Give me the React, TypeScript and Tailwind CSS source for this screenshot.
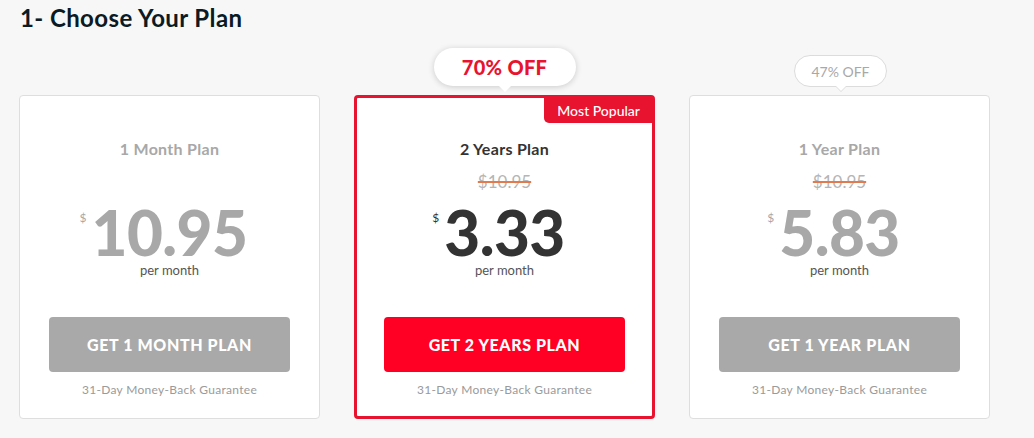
import { JSX } from 'react';

interface Plan {
    name: string;
    price: string;
    oldPrice?: string;
    cta: string;
    featured?: boolean;
    discount?: string;
}

const plans: Plan[] = [
    { name: '1 Month Plan', price: '10.95', cta: 'GET 1 MONTH PLAN' },
    { name: '2 Years Plan', price: '3.33', oldPrice: '$10.95', cta: 'GET 2 YEARS PLAN', featured: true, discount: '70% OFF' },
    { name: '1 Year Plan', price: '5.83', oldPrice: '$10.95', cta: 'GET 1 YEAR PLAN', discount: '47% OFF' },
];

const PlanCard = ({ plan }: { plan: Plan }): JSX.Element => {
    const f = plan.featured;
    return (
        <div
            className={`relative w-[301px] h-[324px] rounded-[4px] bg-white flex flex-col items-center ${
                f ? 'border-[3px] border-[#e8132f]' : 'border border-[#dedede]'
            }`}
        >
            {/* discount bubble */}
            {plan.discount && f && (
                <div className="absolute left-1/2 -translate-x-1/2 -top-[50px] w-[142px] h-[38px] rounded-full bg-white shadow-[0_1px_6px_rgba(0,0,0,0.18)] flex items-center justify-center">
                    <span className="text-[20px] font-black text-[#e8132f] tracking-[0.3px]">{plan.discount}</span>
                    <span className="absolute -bottom-[6px] left-1/2 -translate-x-1/2 w-0 h-0 border-l-[7px] border-r-[7px] border-t-[7px] border-l-transparent border-r-transparent border-t-white" />
                </div>
            )}
            {plan.discount && !f && (
                <div className="absolute left-[104px] -top-[41px] w-[93px] h-[32px] rounded-full bg-white border border-[#dcdcdc] flex items-center justify-center">
                    <span className="text-[14px] text-[#a8a8a8]">{plan.discount}</span>
                    <span className="absolute -bottom-[6px] left-1/2 -translate-x-1/2 w-0 h-0 border-l-[6px] border-r-[6px] border-t-[6px] border-l-transparent border-r-transparent border-t-[#dcdcdc]" />
                    <span className="absolute -bottom-[5px] left-1/2 -translate-x-1/2 w-0 h-0 border-l-[5px] border-r-[5px] border-t-[5px] border-l-transparent border-r-transparent border-t-white" />
                </div>
            )}
            {f && (
                <div className="absolute -top-[1px] -right-[1px] h-[26px] px-[13px] bg-[#e8132f] rounded-bl-[5px] flex items-center">
                    <span className="text-[14px] text-white font-medium">Most Popular</span>
                </div>
            )}

            <div className={`${f ? 'mt-[41px]' : 'mt-[43px]'} text-[16px] leading-[20px] font-bold tracking-[0.3px] ${f ? 'text-[#333]' : 'text-[#a8a8a8]'}`}>
                {plan.name}
            </div>

            <div className={`mt-[13px] h-[20px] px-[2px] text-[17px] leading-[20px] text-[#b5b5b5] line-through decoration-[#e07b4f] decoration-[1.5px] ${plan.oldPrice ? '' : 'invisible'}`}>
                {plan.oldPrice ?? '$10.95'}
            </div>

            <div className="relative mt-[11px] h-[58px]">
                <span className={`absolute right-full top-[7px] mr-[5px] text-[12px] leading-[16px] ${f ? 'text-[#333]' : 'text-[#a8a8a8]'}`}>$</span>
                <span className={`block text-[62px] leading-[58px] font-black tracking-[-0.5px] ${f ? 'text-[#333]' : 'text-[#a8a8a8]'}`}>
                    {plan.price}
                </span>
            </div>
            <div className="mt-[1px] text-[13px] leading-[16px] text-[#555]">per month</div>

            <button
                className={`mt-[39px] w-[241px] h-[55px] rounded-[4px] text-white text-[16px] font-black tracking-[0.6px] ${
                    f ? 'bg-[#ff0024]' : 'bg-[#a9a9a9]'
                }`}
            >
                {plan.cta}
            </button>
            <div className="mt-[10px] text-[12px] leading-[16px] tracking-[0.3px] text-[#9a9a9a]">31-Day Money-Back Guarantee</div>
        </div>
    );
};

const App = (): JSX.Element => {
    return (
        <div className="w-[1034px] h-[438px] bg-[#f7f7f7] overflow-hidden font-['Lato',sans-serif]">
            <div className="pl-[20px] pt-[2px]">
                <h1 className="text-[24px] leading-[32px] font-bold tracking-[0.4px] text-[#0b1a24]">1- Choose Your Plan</h1>
            </div>
            <div className="mt-[61px] ml-[19px] flex items-start gap-[34px]">
                {plans.map((p) => (
                    <PlanCard key={p.name} plan={p} />
                ))}
            </div>
        </div>
    );
};

export default App;
